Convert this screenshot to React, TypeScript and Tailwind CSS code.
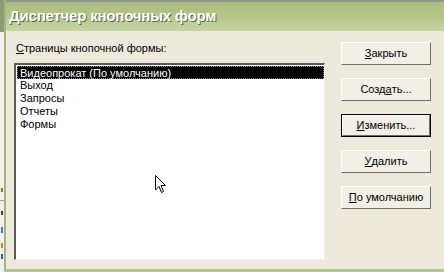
import React from "react";

const ui = { fontFamily: '"Liberation Sans", Arial, sans-serif' };

function Btn({ children, def }: { children: React.ReactNode; def?: boolean }) {
  return (
    <div
      className={
        "h-[23px] w-[90px] flex " +
        (def ? "border border-black" : "")
      }
    >
      <div className="flex-1 flex items-center justify-center bg-[#f1efe6] border-t border-l border-t-white border-l-white border-b border-r border-b-[#716f64] border-r-[#716f64] text-[11px] text-black">
        {children}
      </div>
    </div>
  );
}

export default function App() {
  const items = ["Выход", "Запросы", "Отчеты", "Формы"];
  return (
    <div
      className="relative w-[444px] h-[272px] overflow-hidden bg-[#f4f2ea] flex"
      style={ui}
    >
      <div className="w-[4px] h-full flex flex-col bg-[#f3f1ea]">
        <div className="h-[32px] bg-[#8c9a78]" />
        <div className="h-[156px]" />
        <div className="h-[4px] ml-[1px] w-[2px] bg-[#c8553a]" />
        <div className="h-[8px]" />
        <div className="h-[1px] bg-[#a0a0a0]" />
        <div className="h-[10px]" />
        <div className="h-[4px] ml-[1px] w-[2px] bg-[#553322]" />
        <div className="h-[12px]" />
        <div className="h-[6px] w-[2px] ml-[1px] bg-[#3a78d0]" />
        <div className="h-[10px]" />
        <div className="h-[5px] w-[2px] ml-[1px] bg-[#c87a30]" />
        <div className="h-[6px]" />
        <div className="h-[5px] w-[2px] ml-[1px] bg-[#2a5ab0]" />
        <div className="flex-1" />
      </div>
      <div className="flex-1 flex flex-col border-l-[2px] border-[#a3b67f] border-b-[3px] border-b-[#b5c88f]">
        <div className="h-[2px] bg-[#8f9a8a]" />
        <div className="h-[29px] flex items-center pl-[3px] bg-gradient-to-b from-[#aabd7e] via-[#b4c68a] to-[#c7d6a6]">
          <span
            className="text-white font-bold text-[15px] tracking-[-0.2px]"
            style={{ textShadow: "1px 1px 0 #5c6a4a" }}
          >
            Диспетчер кнопочных форм
          </span>
        </div>
        <div className="flex-1 flex bg-[#eeeadb] pl-[8px] pr-[7px]">
          <div className="flex flex-col w-[311px]">
            <div className="mt-[11px] ml-[2px] h-[13px] leading-[13px] text-[11px] text-black">
              <span className="underline">С</span>траницы кнопочной формы:
            </div>
            <div className="mt-[8px] h-[197px] border-t-2 border-l-2 border-t-[#5a5a5a] border-l-[#5a5a5a] border-b border-r border-b-[#f4f2ea] border-r-[#f4f2ea] bg-white pl-[1px] pt-[1px] flex flex-col">
              <div className="h-[13px] leading-[13px] bg-black text-white text-[11px] pl-[2px] border border-dotted border-[#888]">
                Видеопрокат (По умолчанию)
              </div>
              {items.map((t) => (
                <div key={t} className="h-[13px] leading-[13px] text-[11px] text-black pl-[3px]">
                  {t}
                </div>
              ))}
            </div>
          </div>
          <div className="ml-[16px] mt-[11px] flex flex-col gap-[13px]">
            <Btn>
              <span className="underline">З</span>акрыть
            </Btn>
            <Btn>
              Созд<span className="underline">а</span>ть...
            </Btn>
            <Btn def>
              <span className="underline">И</span>зменить...
            </Btn>
            <Btn>
              <span className="underline">У</span>далить
            </Btn>
            <Btn>
              <span className="underline">П</span>о умолчанию
            </Btn>
          </div>
        </div>
      </div>
      <svg
        className="absolute left-[155px] top-[175px]"
        width="12"
        height="19"
        viewBox="0 0 12 19"
      >
        <path
          d="M0.5 0.5 L0.5 15 L4 11.5 L6.5 17.5 L8.5 16.5 L6 10.5 L10.5 10.5 Z"
          fill="white"
          stroke="black"
          strokeWidth="1"
        />
      </svg>
    </div>
  );
}
